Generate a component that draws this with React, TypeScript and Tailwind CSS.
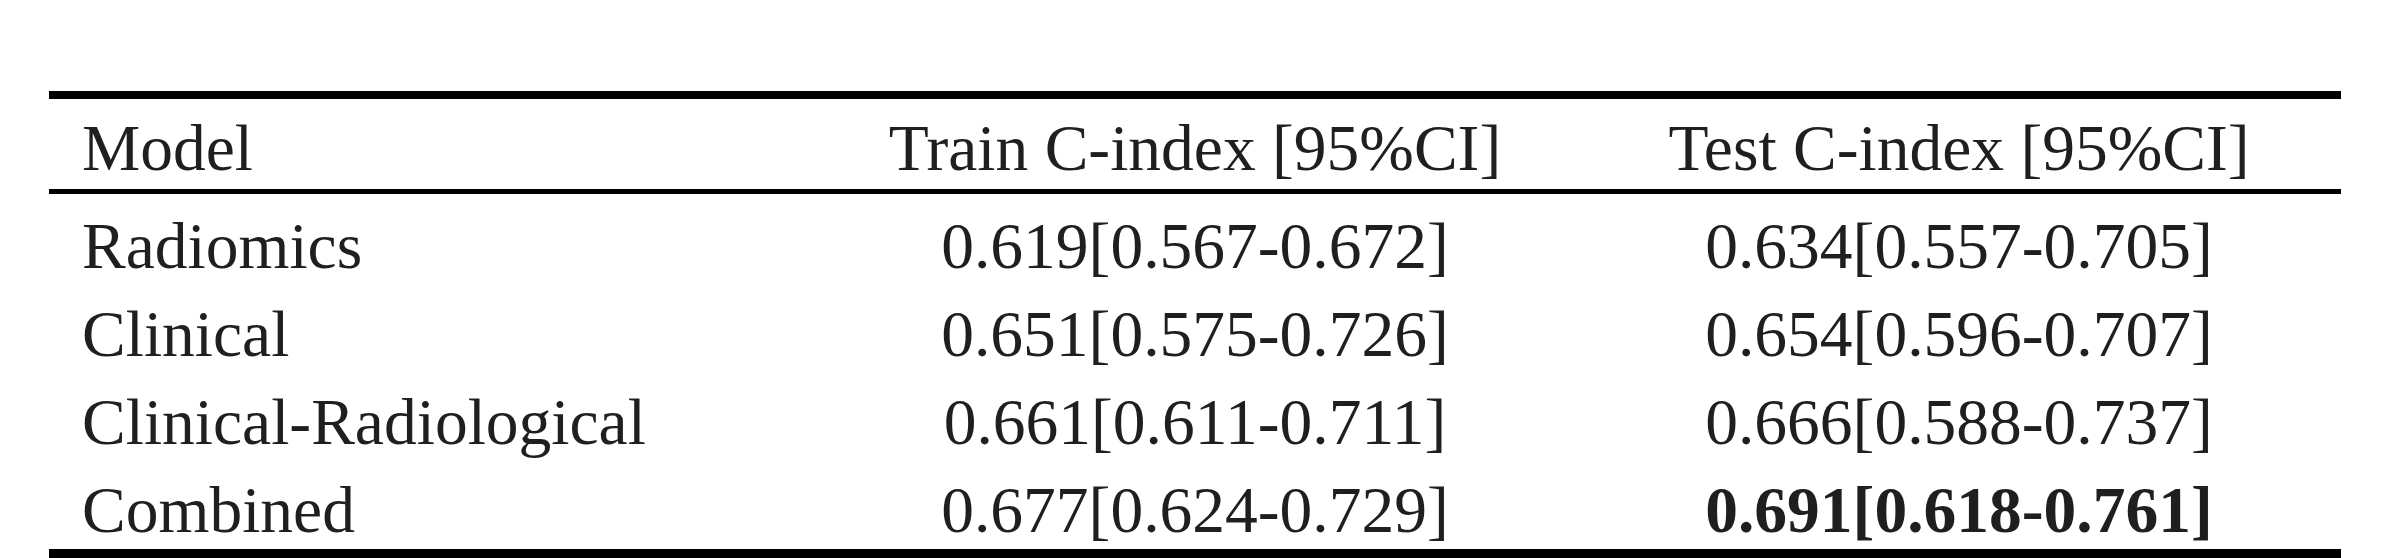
import React from "react";

const rows: { model: string; train: string; test: string; bold?: boolean }[] = [
  { model: "Radiomics", train: "0.619[0.567-0.672]", test: "0.634[0.557-0.705]" },
  { model: "Clinical", train: "0.651[0.575-0.726]", test: "0.654[0.596-0.707]" },
  { model: "Clinical-Radiological", train: "0.661[0.611-0.711]", test: "0.666[0.588-0.737]" },
  { model: "Combined", train: "0.677[0.624-0.729]", test: "0.691[0.618-0.761]", bold: true },
];

export default function App() {
  return (
    <div
      className="w-[2396px] h-[558px] bg-white overflow-hidden pt-[91px] pl-[49px] text-[#1f1f1f]"
      style={{ fontFamily: '"Liberation Serif", "Times New Roman", serif' }}
    >
      <div className="w-[2292px] text-[65.5px] leading-[72px]">
        <div className="grid grid-cols-3 border-t-[8px] border-b-[5px] border-black pt-[13px] pb-[5px]">
          <div className="pl-[33px] whitespace-nowrap">Model</div>
          <div className="text-center whitespace-nowrap">Train C-index [95%CI]</div>
          <div className="text-center whitespace-nowrap">Test C-index [95%CI]</div>
        </div>
        <div className="flex flex-col gap-[16px] pt-[16px] pb-[3px] border-b-[9px] border-black">
          {rows.map((r) => (
            <div key={r.model} className="grid grid-cols-3">
              <div className="pl-[33px] whitespace-nowrap">{r.model}</div>
              <div className="text-center whitespace-nowrap">{r.train}</div>
              <div className={"text-center whitespace-nowrap " + (r.bold ? "font-bold" : "")}>{r.test}</div>
            </div>
          ))}
        </div>
      </div>
    </div>
  );
}
